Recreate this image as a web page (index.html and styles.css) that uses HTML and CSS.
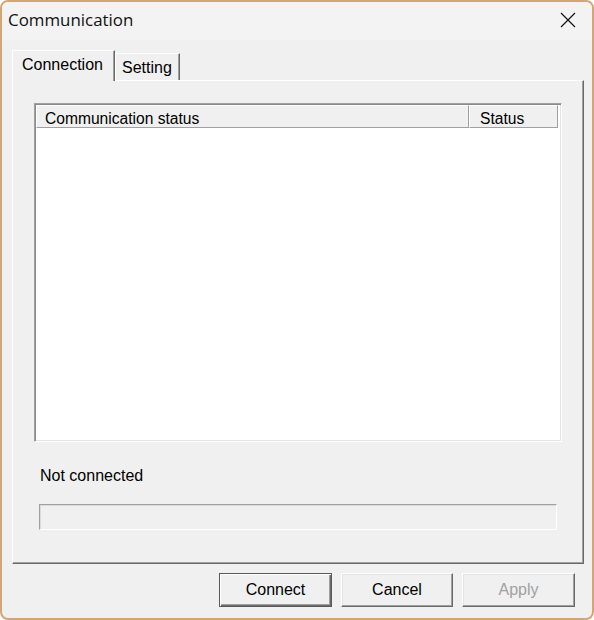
FILE: index.html
```html
<!DOCTYPE html>
<html>
<head>
<meta charset="utf-8">
<title>Communication</title>
<link rel="stylesheet" href="styles.css">
</head>
<body>
<div class="window">
  <div class="titlebar">
    <span class="title">Communication</span>
    <svg class="close" width="16" height="16" viewBox="0 0 16 16"><path d="M1 1L15 15M15 1L1 15" stroke="#111" stroke-width="1.2" fill="none"/></svg>
  </div>
  <div class="content">
    <div class="tabs">
      <div class="tab active">Connection</div>
      <div class="tab second">Setting</div>
    </div>
    <div class="panel">
      <div class="list">
        <div class="header">
          <div class="col c1">Communication status</div>
          <div class="col c2">Status</div>
        </div>
      </div>
      <div class="label">Not connected</div>
      <div class="progress"></div>
    </div>
    <div class="buttons">
      <button class="btn default">Connect</button>
      <button class="btn">Cancel</button>
      <button class="btn disabled">Apply</button>
    </div>
  </div>
</div>
</body>
</html>
```
FILE: styles.css
```css
* { box-sizing: border-box; }
html, body { margin: 0; background: #fff; }
body {
  font-family: "Liberation Sans", Arial, sans-serif;
  font-size: 16px;
  color: #000;
}
.window {
  width: 594px;
  height: 620px;
  border: 2px solid #d3a675;
  border-radius: 8px;
  background: #f0f0f0;
  overflow: hidden;
  display: flex;
  flex-direction: column;
}
.titlebar {
  height: 38px;
  background: #f3f3f3;
  display: flex;
  justify-content: space-between;
  align-items: flex-start;
  padding: 0 16px 0 6px;
}
.title {
  font-family: "Open Sans", "Liberation Sans", sans-serif;
  font-size: 16.9px;
  line-height: 35px;
  color: #111;
}
.close { margin-top: 10px; }
.content {
  padding: 10px 0 0 10px;
}
.tabs {
  display: flex;
  align-items: flex-end;
  height: 30px;
  position: relative;
  z-index: 1;
}
.tab {
  height: 27px;
  background: #f0f0f0;
  border-left: 1px solid #fff;
  border-top: 1px solid #fff;
  border-right: 1px solid #696969;
  box-shadow: inset -1px 0 #a0a0a0;
  padding: 5px 0 0 6px;
  line-height: 18px;
  white-space: nowrap;
}
.tab.active {
  width: 103px;
  height: 31px;
  margin-bottom: -1px;
  padding-left: 9px;
  border-top-left-radius: 2px;
}
.tab.second {
  width: 65px;
}
.panel {
  width: 572px;
  height: 484px;
  border-style: solid;
  border-width: 1px;
  border-color: #fff #696969 #696969 #fff;
  box-shadow: inset -1px -1px #a0a0a0;
}
.list {
  width: 528px;
  height: 339px;
  margin: 22px 0 0 21px;
  background: #fff;
  border: 1px solid;
  border-color: #a0a0a0 #fff #fff #a0a0a0;
  box-shadow: inset 1px 1px #8a8a8a, inset -1px -1px #e3e3e3;
  padding: 1px;
}
.header {
  display: flex;
  height: 23px;
}
.col {
  height: 23px;
  background: #f0f0f0;
  border-top: 1px solid #fff;
  border-left: 1px solid #fff;
  border-right: 1px solid #a0a0a0;
  border-bottom: 1px solid #a0a0a0;
  padding: 4px 0 0 8px;
  font-size: 15.6px;
  line-height: 17px;
  white-space: nowrap;
}
.c1 { width: 433px; }
.c2 { width: 89px; padding-left: 10px; }
.label {
  margin: 25px 0 0 27px;
  line-height: 18px;
}
.progress {
  width: 518px;
  height: 26px;
  margin: 19px 0 0 26px;
  border: 1px solid;
  border-color: #a0a0a0 #fff #fff #a0a0a0;
  box-shadow: inset 1px 1px #dadada;
}
.buttons {
  display: flex;
  justify-content: flex-end;
  gap: 9px;
  margin-top: 9px;
  padding-right: 17px;
}
.btn {
  width: 112px;
  height: 34px;
  padding: 0;
  font: inherit;
  font-size: 16px;
  color: #000;
  background: #f0f0f0;
  border: 1px solid;
  border-color: #fff #696969 #696969 #fff;
  box-shadow: inset -1px -1px #a0a0a0, inset 1px 1px #e3e3e3;
}
.btn.default {
  width: 113px;
  border: 1px solid #5a5a5a;
  box-shadow: inset 1px 1px #fff, inset -1px -1px #696969, inset -2px -2px #a0a0a0;
}
.btn.disabled {
  width: 113px;
  color: #a0a0a0;
}
```
